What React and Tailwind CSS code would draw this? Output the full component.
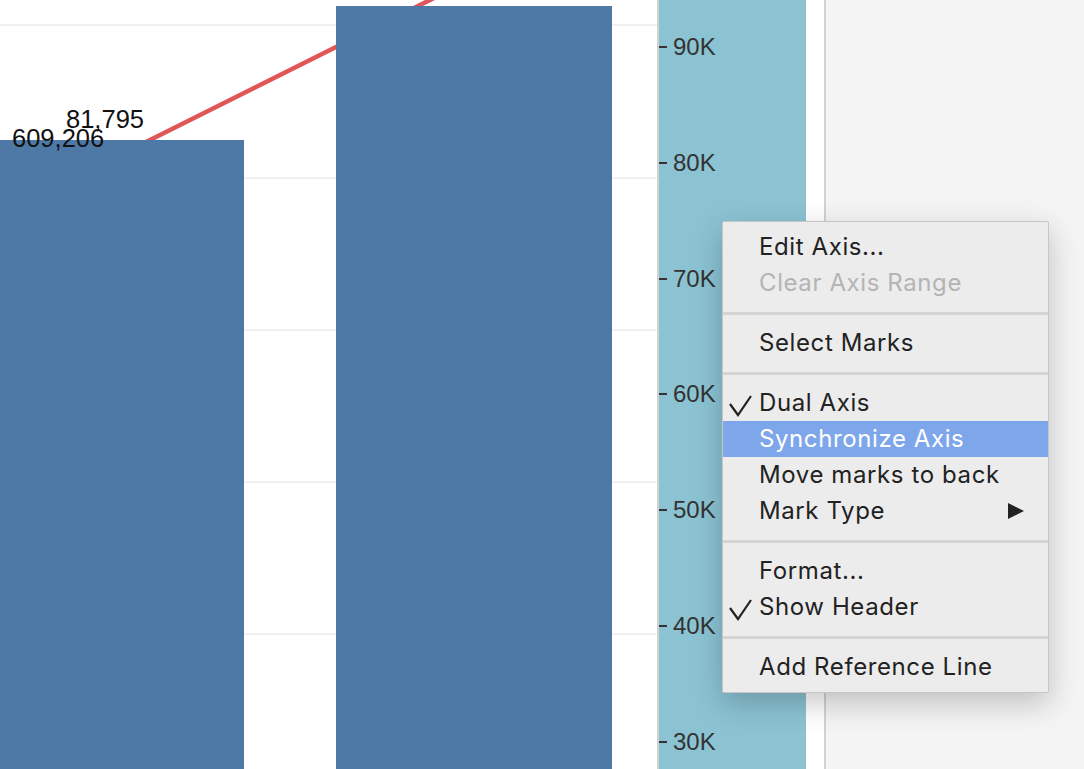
import React from "react";

const ticks = ["90K", "80K", "70K", "60K", "50K", "40K", "30K"];
const grid = [24, 177, 329, 481, 633];

const Check = () => (
  <svg className="absolute left-[5px] top-[9px]" width="26" height="24" viewBox="0 0 26 24">
    <polyline points="2,10 10,21 23,2" fill="none" stroke="#222" strokeWidth="2.2" />
  </svg>
);

const Item = ({ label, checked, disabled, active, submenu }) => (
  <div
    className={`relative h-[36px] flex items-center pl-[36px] pr-[24px] ${
      active ? "bg-[#7ea6ea] text-white" : disabled ? "text-[#b4b4b4]" : "text-[#222]"
    }`}
  >
    {checked && <Check />}
    <span className="flex-1">{label}</span>
    {submenu && (
      <svg width="16" height="16" viewBox="0 0 16 16">
        <polygon points="0,0 16,8 0,16" fill="#222" />
      </svg>
    )}
  </div>
);

const Sep = () => (
  <div className="h-[24px] flex items-center">
    <div className="h-[3px] w-full bg-[#d4d4d4]" />
  </div>
);

export default function App() {
  return (
    <div className="relative w-[1084px] h-[769px] overflow-hidden flex bg-white font-['Liberation_Sans',sans-serif]">
      {/* chart */}
      <div className="w-[657px] h-full shrink-0">
        <svg width="657" height="769" viewBox="0 0 657 769">
          {grid.map((y) => (
            <rect key={y} x="0" y={y} width="657" height="2" fill="#f0f0f0" />
          ))}
          <line x1="140" y1="145" x2="446" y2="-8" stroke="#e15759" strokeWidth="4.5" />
          <rect x="0" y="140" width="244" height="629" fill="#4e79a7" />
          <rect x="336" y="6" width="276" height="763" fill="#4e79a7" />
          <text x="66" y="128" fontSize="25.5" fill="#111" fontFamily="Liberation Sans, sans-serif">
            81,795
          </text>
          <text x="12" y="147" fontSize="25.5" fill="#111" fontFamily="Liberation Sans, sans-serif">
            609,206
          </text>
        </svg>
      </div>

      {/* axis */}
      <div className="w-[149px] h-full shrink-0 border-l-2 border-[#d2d2d2] bg-[#8bc3d3] flex flex-col pt-[35px] gap-[91.8px]">
        {ticks.map((t) => (
          <div key={t} className="h-[24px] flex items-center">
            <div className="w-[8px] h-[2px] bg-[#333]" />
            <span className="ml-[6px] text-[24px] leading-none text-[#333]">{t}</span>
          </div>
        ))}
      </div>

      <div className="w-[18px] h-full shrink-0 bg-white" />
      <div className="flex-1 h-full border-l-2 border-[#d2d2d2] bg-[#f4f4f4]" />

      {/* context menu */}
      <div className="absolute left-[722px] top-[221px] w-[327px] bg-[#ececec] border border-[#c6c6c6] rounded-[2px] py-[7px] shadow-[0_10px_30px_rgba(0,0,0,0.22)] font-['Inter',sans-serif] text-[24px] tracking-[0.025em]">
        <Item label="Edit Axis..." />
        <Item label="Clear Axis Range" disabled />
        <Sep />
        <Item label="Select Marks" />
        <Sep />
        <Item label="Dual Axis" checked />
        <Item label="Synchronize Axis" active />
        <Item label="Move marks to back" />
        <Item label="Mark Type" submenu />
        <Sep />
        <Item label="Format..." />
        <Item label="Show Header" checked />
        <Sep />
        <Item label="Add Reference Line" />
      </div>
    </div>
  );
}
